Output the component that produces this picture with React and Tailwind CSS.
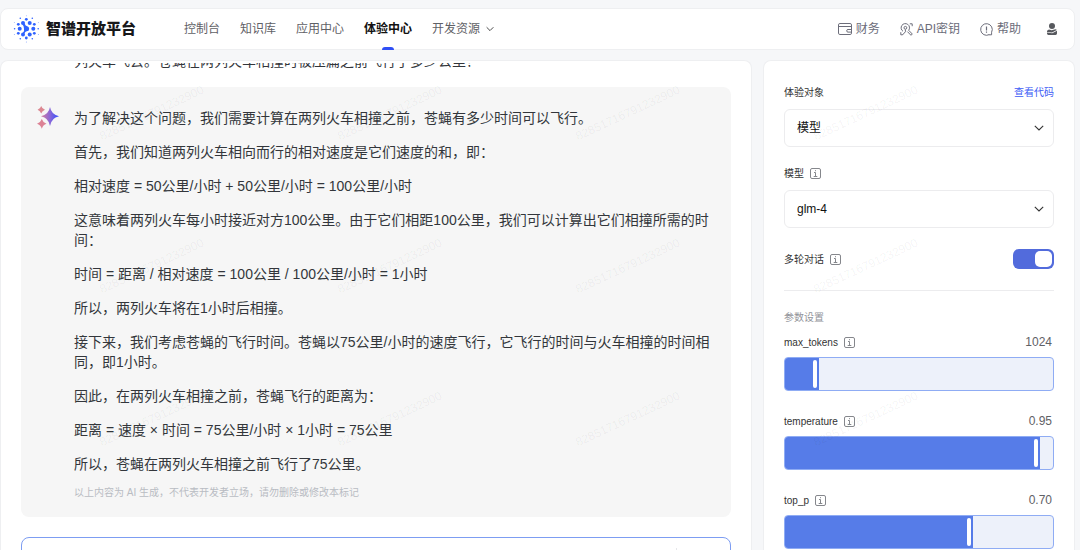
import React, { useState } from 'react';

const NAV = ['控制台', '知识库', '应用中心', '体验中心', '开发资源'];

const ANSWER = [
  '为了解决这个问题，我们需要计算在两列火车相撞之前，苍蝇有多少时间可以飞行。',
  '首先，我们知道两列火车相向而行的相对速度是它们速度的和，即：',
  '相对速度 = 50公里/小时 + 50公里/小时 = 100公里/小时',
  '这意味着两列火车每小时接近对方100公里。由于它们相距100公里，我们可以计算出它们相撞所需的时间：',
  '时间 = 距离 / 相对速度 = 100公里 / 100公里/小时 = 1小时',
  '所以，两列火车将在1小时后相撞。',
  '接下来，我们考虑苍蝇的飞行时间。苍蝇以75公里/小时的速度飞行，它飞行的时间与火车相撞的时间相同，即1小时。',
  '因此，在两列火车相撞之前，苍蝇飞行的距离为：',
  '距离 = 速度 × 时间 = 75公里/小时 × 1小时 = 75公里',
  '所以，苍蝇在两列火车相撞之前飞行了75公里。',
];

// [x, y, radius]
const LOGO_DOTS = [
  [10, 8, 2], [16.7, 8, 2], [6.7, 13.7, 2], [20.3, 13.7, 2], [10, 19.6, 2], [16.7, 19.6, 2],
  [13.3, 4.3, 1.4], [5.3, 9.3, 1.4], [21.3, 9.3, 1.4], [5.3, 18.3, 1.4], [21.3, 18.3, 1.4], [13.3, 23, 1.4],
  [7.3, 3.3, 0.8], [19.3, 3.3, 0.8], [7.3, 23.7, 0.8], [19.3, 23.7, 0.8], [1.6, 13.7, 0.8], [25.2, 13.7, 0.8],
  [13.3, 0.8, 0.4], [13.3, 27, 0.4], [1.3, 7.7, 0.4], [25.3, 7.7, 0.4], [1.3, 19.5, 0.4], [25.3, 19.5, 0.4],
];

const Logo = () => (
  <svg width="27" height="28" viewBox="0 0 27 28" fill="#2f62ff" aria-hidden="true">
    {LOGO_DOTS.map(([x, y, r]) => (
      <circle key={`${x}-${y}`} cx={x} cy={y} r={r} />
    ))}
    <circle cx="13.6" cy="13.7" r="2.5" />
    <path d="M9.4 9.6 11.600 8.600Q12.400 11.200 14.200 11.300L13.800 16Q12 16.600 11.500 18.600L9.800 17.800Q11.800 16 11 13.700Q11 11 9.400 9.600Z" />
  </svg>
);

const Chevron = ({ className }) => (
  <svg className={className} width="10" height="6" viewBox="0 0 10 6" fill="none" stroke="currentColor" strokeWidth="1.1" aria-hidden="true">
    <path d="M.8.8 5 5 9.2.8" />
  </svg>
);

const WalletIcon = () => (
  <svg width="14" height="12" viewBox="0 0 14 12" fill="none" stroke="currentColor" strokeWidth="1" aria-hidden="true">
    <rect x=".5" y=".5" width="13" height="11" rx="1.4" />
    <path d="M.5 3.500h13M13.500 6.500h-3.500a1.300 1.300 0 0 0 0 2.600h3.500" />
  </svg>
);

const KeyIcon = () => (
  <svg width="13" height="13" viewBox="0 0 13 13" fill="none" stroke="currentColor" strokeWidth="1" aria-hidden="true">
    <circle cx="5.4" cy="4.8" r="1.4" />
    <path d="M3 8.300a4.200 4.200 0 1 1 5.700-1l3.600 3.700-1.300 1.300L7.400 8.600M5.400 6.500v2.300L2.400 12M.8 9.200v2.600h1.800M9.800.8h2.400v2.400" />
  </svg>
);

const HelpIcon = () => (
  <svg width="13" height="13" viewBox="0 0 13 13" fill="none" stroke="currentColor" strokeWidth="1" aria-hidden="true">
    <path d="M9.200 11.600A5.800 5.800 0 1 1 11.600 9.200V11.800H8.800" />
    <path d="M6.500 3.400v4M6.500 8.600v1.100" strokeWidth="1.2" />
  </svg>
);

const UserIcon = () => (
  <svg width="10" height="12" viewBox="0 0 10 12" fill="#57595e" aria-hidden="true">
    <circle cx="5" cy="3" r="3" />
    <path d="M0 8.6Q0 6.6 2 6.4L4.6 7.2 8.4 6.2Q9.4 6.5 9.8 7L5 9.600 0 8.900Z" />
    <path d="M0 9.500 5.200 10.300 10 7.700v2.900Q10 12 8.600 12H1.400Q0 12 0 10.600Z" />
  </svg>
);

const SparkIcon = () => (
  <svg className="shrink-0" width="22" height="24" viewBox="0 0 22 24" aria-hidden="true">
    <defs>
      <linearGradient id="spark" x1="0" x2="1" y1="0" y2="0">
        <stop offset="0" stopColor="#d77f9b" />
        <stop offset=".5" stopColor="#8a68d8" />
        <stop offset="1" stopColor="#2f4dff" />
      </linearGradient>
    </defs>
    <path fill="url(#spark)" d="M13 2Q14.4 9.7 22 11.2Q14.4 12.7 13 21Q11.6 12.7 4 11.2Q11.6 9.7 13 2Z" />
    <path fill="#dc8791" d="M4.2 1Q5.2 3.9 8 4.8Q5.2 5.7 4.2 8.5Q3.2 5.7.6 4.8Q3.2 3.9 4.2 1Z" />
    <path fill="#dc8295" d="M4.8 14Q6 17.6 9.5 18.7Q6 19.8 4.8 23.8Q3.6 19.8 0 18.7Q3.6 17.6 4.8 14Z" />
  </svg>
);

const InfoIcon = () => (
  <svg width="11" height="11" viewBox="0 0 11 11" fill="none" stroke="#85878c" strokeWidth="1" aria-hidden="true">
    <rect x=".5" y=".5" width="10" height="10" rx="1.5" />
    <path d="M4 4.5h1.5v4M3.7 8.5h3.6M5 2.7h1" />
  </svg>
);

const SendIcon = () => (
  <svg className="mx-auto" width="14" height="14" viewBox="0 0 14 14" fill="#b9bcc3" aria-hidden="true">
    <path d="M7 0 13 13 7 10.500 1 13Z" />
  </svg>
);

const Header = () => (
  <header className="flex h-[42px] shrink-0 items-center rounded-lg border border-[#eeeff1] bg-white pl-3 pr-[17px] text-xs">
    <a href="#home" className="flex items-center gap-1.5">
      <Logo />
      <span className="text-[15px] font-black text-[#17181a]">智谱开放平台</span>
    </a>
    <nav className="ml-12 flex h-full items-center gap-5 text-[#5f6166]">
      {NAV.map((item) => {
        const active = item === '体验中心';
        return (
          <a
            key={item}
            href="#nav"
            className={
              active
                ? 'relative flex h-full items-center font-bold text-[#111]'
                : 'flex h-full items-center gap-1.5'
            }
          >
            {item}
            {active && <span className="absolute -bottom-px left-1/2 h-[3px] w-3 -translate-x-1/2 rounded-t-full bg-[#2f4ff5]" />}
            {item === '开发资源' && <Chevron className="w-2 text-[#333]" />}
          </a>
        );
      })}
    </nav>
    <div className="ml-auto flex items-center gap-5 text-[#6c6d7a]">
      <a href="#finance" className="flex items-center gap-1"><WalletIcon />财务</a>
      <a href="#keys" className="flex items-center gap-1"><KeyIcon />API密钥</a>
      <a href="#help" className="flex items-center gap-1"><HelpIcon />帮助</a>
      <button type="button" aria-label="账户" className="ml-1.5"><UserIcon /></button>
    </div>
  </header>
);

const Chat = () => (
  <main className="flex min-w-0 flex-1 flex-col rounded-t-lg border border-b-0 border-[#eeeff1] bg-white px-5 pt-0.5">
    <div className="shrink-0 overflow-hidden text-sm leading-5 text-[#33363b]">
      <p className="-mt-3 pl-[53px]">列火车飞去。苍蝇在两列火车相撞时被压扁之前飞行了多少公里？</p>
    </div>
    <section className="mt-4 flex shrink-0 gap-[15px] rounded-lg bg-[#f6f6f6] px-4 pb-4 pt-[18px]">
      <SparkIcon />
      <div className="min-w-0 flex-1 pt-[3px]">
        <div className="flex flex-col gap-3.5 text-sm leading-5 text-[#33363b]">
          {ANSWER.map((line) => (
            <p key={line}>{line}</p>
          ))}
        </div>
        <p className="mt-[11px] text-[10px] leading-4 text-[#b9bcc3]">
          以上内容为 AI 生成，不代表开发者立场，请勿删除或修改本标记
        </p>
      </div>
    </section>
    <form className="mt-5 flex h-24 shrink-0 rounded-lg border border-[#7d9df2] pl-4 pr-3.5 pt-2.5">
      <textarea aria-label="输入内容" placeholder="请输入内容" className="flex-1 resize-none text-sm outline-none placeholder:text-[#b9bcc3]" />
      <button type="submit" aria-label="发送" className="h-8 w-10 border-l border-[#e6e7ea]"><SendIcon /></button>
    </form>
  </main>
);

const Field = ({ id, label, options, info, action }) => (
  <div>
    <div className="flex h-5 items-center gap-1.5">
      <label htmlFor={id}>{label}</label>
      {info && <InfoIcon />}
      {action}
    </div>
    <div className="relative mt-[7px]">
      <select id={id} className="h-[38px] w-full appearance-none rounded-md border border-[#ececee] bg-white px-3 text-xs text-[#111]">
        {options.map((o) => (
          <option key={o}>{o}</option>
        ))}
      </select>
      <Chevron className="pointer-events-none absolute right-2.5 top-1/2 -translate-y-1/2 text-[#333]" />
    </div>
  </div>
);

const Slider = ({ name, max, step, initial, digits }) => {
  const [value, setValue] = useState(initial);
  return (
    <div>
      <div className="flex h-5 items-center gap-1.5">
        <label htmlFor={name}>{name}</label>
        <InfoIcon />
        <output htmlFor={name} className="ml-auto pr-0.5 text-xs text-[#5f6166]">{value.toFixed(digits)}</output>
      </div>
      <div className="relative mt-[5px] h-[34px] overflow-hidden rounded border border-[#8facf4] bg-[#edf1fa]">
        <div className="flex h-full items-center justify-end bg-[#567ce8] pr-0.5" style={{ width: `${(value / max) * 100}%` }}>
          <span className="h-7 w-1 rounded-full bg-white" />
        </div>
        <input
          id={name}
          type="range"
          min={0}
          max={max}
          step={step}
          value={value}
          onChange={(e) => setValue(Number(e.target.value))}
          className="absolute inset-0 h-full w-full cursor-pointer opacity-0"
        />
      </div>
    </div>
  );
};

const Settings = () => (
  <aside className="w-[312px] shrink-0 rounded-t-lg border border-b-0 border-[#eeeff1] bg-white px-5 pt-[21px] text-[10px] text-[#333]">
    <div className="flex flex-col gap-4">
      <Field
        id="target"
        label="体验对象"
        options={['模型', '智能体']}
        action={<a href="#code" className="ml-auto text-[#3d5cf5]">查看代码</a>}
      />
      <Field id="model" label="模型" info options={['glm-4', 'glm-3-turbo']} />
    </div>
    <div className="flex items-center gap-1.5 border-b border-[#ececee] py-[21px]">
      <label htmlFor="multi">多轮对话</label>
      <InfoIcon />
      <input
        id="multi"
        type="checkbox"
        defaultChecked
        className="ml-auto h-5 w-[41px] appearance-none rounded-md bg-[#c4c8d2] p-0.5 before:block before:h-4 before:w-[17px] before:rounded-[5px] before:bg-white checked:bg-[#526bdc] checked:before:ml-auto"
      />
    </div>
    <h2 className="mt-[17px] h-5 leading-5 text-[#92949a]">参数设置</h2>
    <div className="mt-1 flex flex-col gap-5">
      <Slider name="max_tokens" max={8192} step={1} initial={1024} digits={0} />
      <Slider name="temperature" max={1} step={0.01} initial={0.95} digits={2} />
      <Slider name="top_p" max={1} step={0.01} initial={0.7} digits={2} />
    </div>
  </aside>
);

const Watermark = () => (
  <div aria-hidden="true" className="pointer-events-none absolute inset-0 grid auto-rows-[153px] grid-cols-[repeat(4,238px)] overflow-hidden pl-[33px] pt-9 text-xs text-black/5">
    {Array.from({ length: 12 }, (_, i) => (
      <span key={i} className="-rotate-25 place-self-center">82851716791232900</span>
    ))}
  </div>
);

export default function App() {
  return (
    <div className="relative flex h-screen flex-col gap-2.5 overflow-hidden bg-[#f6f7f9] pr-[5px] pt-2 font-['Liberation_Sans','Noto_Sans_CJK_SC',sans-serif]">
      <Header />
      <div className="flex min-h-0 flex-1 gap-[11px] overflow-hidden">
        <Chat />
        <Settings />
      </div>
      <Watermark />
    </div>
  );
}
